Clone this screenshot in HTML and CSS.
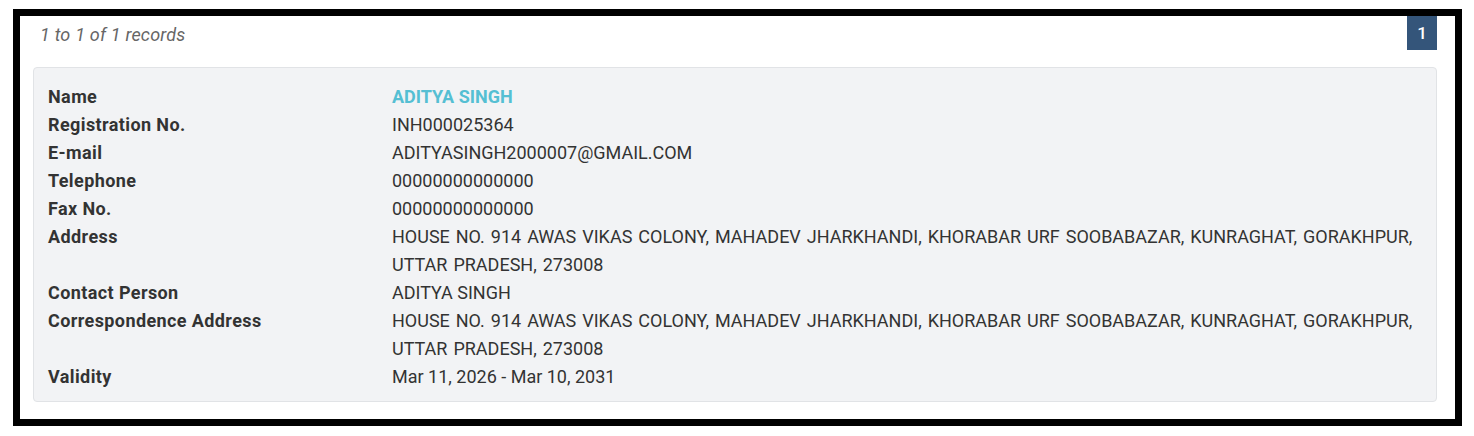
FILE: index.html
```html
<!DOCTYPE html>
<html>
<head>
<meta charset="utf-8">
<link rel="stylesheet" href="styles.css">
</head>
<body>
<div class="frame">
  <div class="topbar">
    <div class="count">1 to 1 of 1 records</div>
    <div class="pager"><span class="page">1</span></div>
  </div>
  <div class="card">
    <div class="lbl">Name</div><div class="val name">ADITYA SINGH</div>
    <div class="lbl">Registration No.</div><div class="val">INH000025364</div>
    <div class="lbl">E-mail</div><div class="val">ADITYASINGH2000007@GMAIL.COM</div>
    <div class="lbl">Telephone</div><div class="val">00000000000000</div>
    <div class="lbl">Fax No.</div><div class="val">00000000000000</div>
    <div class="lbl">Address</div><div class="val addr">HOUSE NO. 914 AWAS VIKAS COLONY, MAHADEV JHARKHANDI, KHORABAR URF SOOBABAZAR, KUNRAGHAT, GORAKHPUR, UTTAR PRADESH, 273008</div>
    <div class="lbl">Contact Person</div><div class="val">ADITYA SINGH</div>
    <div class="lbl">Correspondence Address</div><div class="val addr">HOUSE NO. 914 AWAS VIKAS COLONY, MAHADEV JHARKHANDI, KHORABAR URF SOOBABAZAR, KUNRAGHAT, GORAKHPUR, UTTAR PRADESH, 273008</div>
    <div class="lbl">Validity</div><div class="val">Mar 11, 2026 - Mar 10, 2031</div>
  </div>
</div>
</body>
</html>
```
FILE: styles.css
```css
html, body {
  margin: 0;
  padding: 0;
  background: #fff;
}
body {
  font-family: Roboto, "Liberation Sans", Arial, sans-serif;
  color: #333;
}
.frame {
  margin: 9px 12px 10px 13px;
  border: 7px solid #000;
  height: 403px;
  box-sizing: content-box;
  display: flex;
  flex-direction: column;
}
.topbar {
  display: flex;
  justify-content: space-between;
  align-items: stretch;
  height: 34px;
  padding: 0 18px 0 20px;
}
.count {
  font-style: italic;
  font-size: 18px;
  letter-spacing: 0.2px;
  color: #666;
  line-height: 34px;
  padding-top: 2px;
}
.pager {
  display: flex;
}
.page {
  width: 30px;
  height: 34px;
  background: #34557a;
  color: #fff;
  font-size: 17px;
  font-weight: 500;
  display: flex;
  align-items: center;
  justify-content: center;
}
.card {
  margin: 17px 18px 0 13px;
  background: #f2f3f5;
  border: 1px solid #e1e3e6;
  border-radius: 4px;
  padding: 15px 14px 10px 14px;
  display: grid;
  grid-template-columns: 344px 1fr;
  font-size: 18px;
  line-height: 28px;
}
.lbl {
  font-weight: 700;
  letter-spacing: 0.4px;
  color: #333;
}
.val {
  color: #333;
}
.val.addr {
  word-spacing: 1.5px;
}
.val.name {
  color: #55bfd3;
  font-weight: 700;
}
```
